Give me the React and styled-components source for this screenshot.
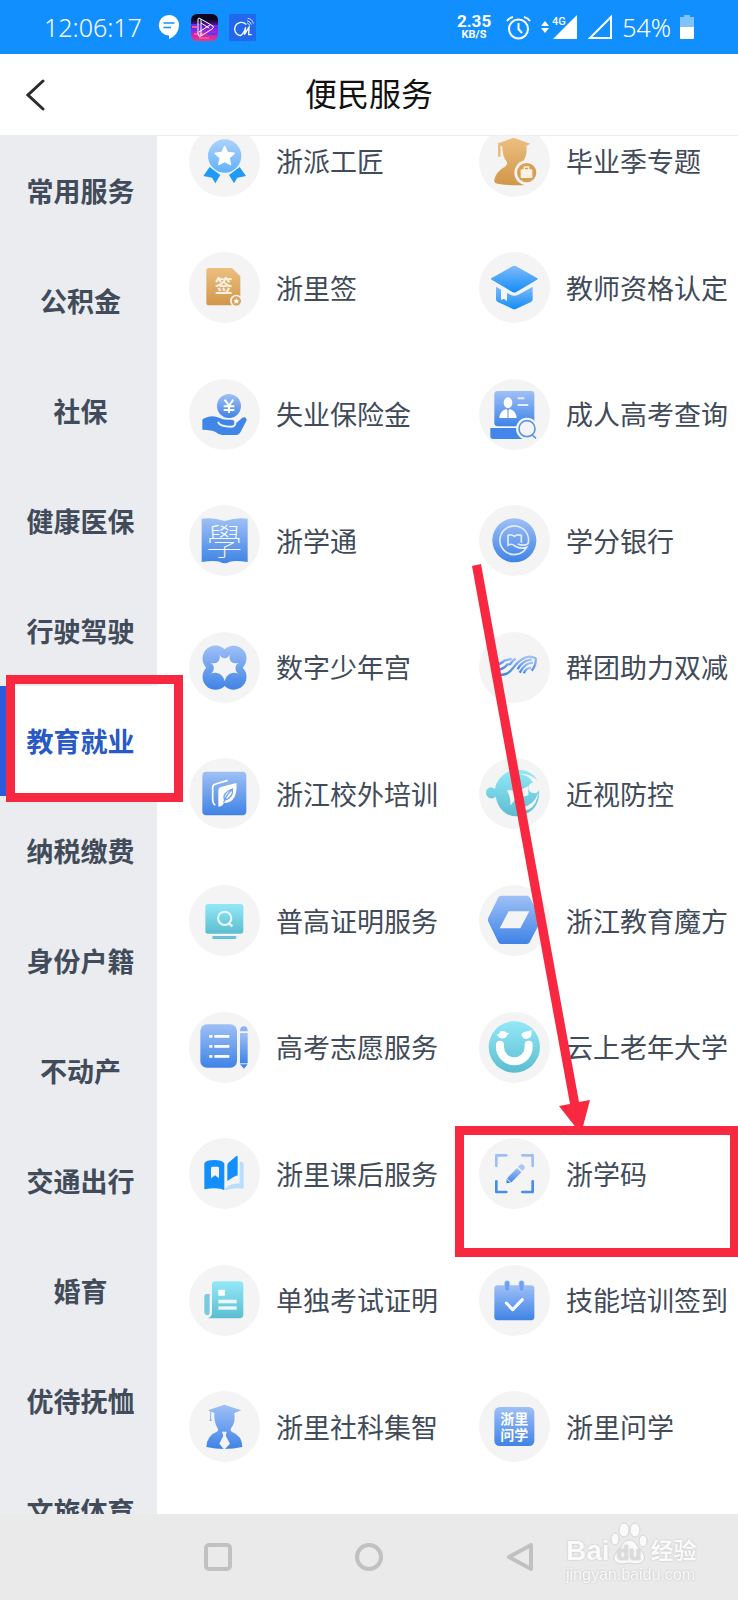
import React from 'react';
import styled, { createGlobalStyle } from 'styled-components';

const GlobalStyle = createGlobalStyle`
  * {
    box-sizing: border-box;
  }
  body {
    margin: 0;
    background: #ffffff;
    font-family: 'Noto Sans CJK SC', sans-serif;
  }
  button {
    border: 0;
    padding: 0;
    background: none;
    font-family: inherit;
    cursor: pointer;
  }
`;

const Screen = styled.div`
  position: relative;
  display: flex;
  flex-direction: column;
  height: 100vh;
  overflow: hidden;
`;

const StatusBar = styled.div`
  display: flex;
  flex-shrink: 0;
  justify-content: space-between;
  align-items: center;
  height: 54px;
  padding: 0 44px;
  background: #128fff;
  color: #ffffff;
`;

const StatusGroup = styled.div`
  display: flex;
  align-items: center;
  gap: ${(props) => props.$gap}px;
`;

const StatusText = styled.span`
  font-family: 'Noto Sans', sans-serif;
  font-size: 25px;
  font-weight: 300;
  line-height: 32px;
`;

const Speed = styled.div`
  display: flex;
  flex-direction: column;
  align-items: center;
  margin-right: 6px;
  font-family: Roboto, sans-serif;
  font-weight: 700;
  font-size: 17px;
  line-height: 15px;
`;

const SpeedUnit = styled.span`
  font-size: 11px;
  line-height: 12px;
`;

const Header = styled.header`
  display: grid;
  grid-template-columns: 72px 1fr 72px;
  flex-shrink: 0;
  align-items: center;
  height: 82px;
  border-bottom: 1px solid #ededee;
`;

const BackButton = styled.button`
  display: flex;
  justify-content: center;
  align-items: center;
  height: 80px;
`;

const Title = styled.h1`
  margin: 0;
  padding-bottom: 5px;
  text-align: center;
  font-size: 32px;
  font-weight: 400;
  line-height: 48px;
  color: #111111;
`;

const Content = styled.main`
  display: flex;
  flex: 1;
  min-height: 0;
  overflow: hidden;
`;

const Sidebar = styled.nav`
  flex: 0 0 157px;
  overflow: hidden;
  background: #ebecf0;
`;

const Category = styled.button`
  display: block;
  width: 100%;
  height: 110px;
  border-left: 6px solid ${(props) => (props.$active ? '#2b5bdb' : 'transparent')};
  padding-right: 2px;
  background: ${(props) => (props.$active ? '#ffffff' : 'transparent')};
  color: ${(props) => (props.$active ? '#2859c5' : '#414b59')};
  font-size: 27px;
  font-weight: 700;
  line-height: 40px;
`;

const Services = styled.section`
  flex: 1;
  min-width: 0;
  overflow: hidden;
`;

// The list is scrolled a little, so its first row is cut by the header
const ServiceGrid = styled.div`
  display: grid;
  grid-template-columns: 1fr 1fr;
  grid-template-rows: repeat(11, 1fr);
  height: 1392px;
  margin-top: -38px;
  padding-right: 1px;
`;

const Service = styled.a`
  display: flex;
  align-items: center;
  gap: 16px;
  padding-left: 32px;
  color: #414b59;
  font-size: 27px;
  font-weight: 400;
  line-height: 40px;
  text-decoration: none;
  white-space: nowrap;
`;

const IconCircle = styled.span`
  display: flex;
  flex: 0 0 71px;
  height: 71px;
  border-radius: 50%;
  background: #f4f4f4;
  overflow: hidden;

  svg {
    width: 100%;
    height: 100%;
  }
`;

const SystemNav = styled.footer`
  display: flex;
  flex-shrink: 0;
  justify-content: center;
  align-items: center;
  gap: 121px;
  height: 86px;
  background: #eaeaea;
`;

const SystemButton = styled.button`
  display: flex;
  width: 30px;
  height: 30px;
`;

const Marker = styled.div`
  position: absolute;
  left: ${(props) => props.$left}px;
  top: ${(props) => props.$top}px;
  width: ${(props) => props.$width}px;
  height: ${(props) => props.$height}px;
  border: 9px solid #f7283f;
  pointer-events: none;
`;

const Arrow = styled.svg`
  position: absolute;
  left: 460px;
  top: 560px;
  pointer-events: none;
`;

const Watermark = styled.div`
  position: absolute;
  right: 38px;
  bottom: 16px;
  width: 134px;
  color: #fafafa;
  text-shadow: 0 0 2px #b8b8b8;
  font-family: 'Liberation Sans', 'Noto Sans CJK SC', sans-serif;
`;

const WatermarkBrand = styled.div`
  display: flex;
  align-items: flex-end;
  height: 44px;
  font-size: 28px;
  font-weight: 700;
  line-height: 30px;
`;

const WatermarkName = styled.span`
  margin-left: 3px;
  font-size: 23px;
`;

const WatermarkUrl = styled.div`
  font-size: 16px;
  line-height: 18px;
`;

const Defs = styled.svg`
  position: absolute;
  width: 0;
  height: 0;
`;

const BG = '#f4f4f4';
const BLUE = 'url(#blue)';
const SKY = 'url(#sky)';
const TEAL = 'url(#teal)';
const GOLD = 'url(#gold)';

const gradients = [
  ['blue', '#9fc0f6', '#3f83e6'],
  ['sky', '#80bbfb', '#138cf7'],
  ['pale', '#add2fd', '#62b1fb'],
  ['teal', '#93e8f7', '#5cbdd0'],
  ['gold', '#ecbf80', '#d1964a'],
];

const icons = {
  medal: (
    <>
      <circle cx="107" cy="90" r="50" fill="url(#pale)" />
      <path
        d="M107 62 L115 80 L135 82 L120 96 L124 115 L107 106 L90 115 L94 96 L79 82 L99 80Z"
        fill="#fff"
        stroke="#fff"
        strokeWidth="5"
        strokeLinejoin="round"
      />
      <path d="M62 123 L94 147 L79 172 L69 155 L43 150Z" fill="#1f9af7" />
      <path d="M152 123 L120 147 L135 172 L145 155 L171 150Z" fill="#1f9af7" />
    </>
  ),
  sign: (
    <>
      <path d="M60 48 H129 L154 73 V152 Q154 160 146 160 H60 Q52 160 52 152 V56 Q52 48 60 48Z" fill={GOLD} />
      <text x="104" y="124" fontSize="54" fontWeight="700" textAnchor="middle" fill="#fbf2e4">签</text>
      <circle cx="142" cy="147" r="19" fill={BG} />
      <circle cx="142" cy="147" r="14" fill="#d9a55f" />
      <path d="M142 139 L145 144 L150 145 L147 149 L148 155 L142 152 L136 155 L137 149 L134 145 L139 144Z" fill={BG} />
    </>
  ),
  coin: (
    <>
      <circle cx="120" cy="81" r="36" fill={BLUE} />
      <path d="M107 62 L120 80 L133 62 M120 80 V102 M104 82 H136 M104 93 H136" fill="none" stroke="#fff" strokeWidth="6" />
      <path
        d="M40 124 Q40 119 46 118 Q70 106 90 116 Q102 124 124 122 Q138 123 142 132 L160 116 Q172 112 173 124 L155 158 Q150 168 138 168 H100 Q88 166 78 158 Q70 153 40 152Z"
        fill="#3f86e8"
      />
      <path d="M88 131 Q94 143 126 143 Q142 142 138 129" fill="none" stroke={BG} strokeWidth="6" strokeLinecap="round" />
    </>
  ),
  graduateBag: (
    <>
      <path
        d="M54 53 L104 35 L154 53 L142 60 Q146 92 130 108 Q126 122 140 132 L150 176 Q100 180 60 174 Q44 172 46 162 Q50 136 78 122 Q86 118 84 108 Q70 92 70 62Z"
        fill={GOLD}
      />
      <path d="M61 56 V92" stroke="#e9b874" strokeWidth="7" />
      <circle cx="143" cy="140" r="37" fill={BG} />
      <circle cx="143" cy="140" r="29" fill="#d9a055" />
      <rect x="125" y="130" width="35" height="26" rx="3" fill="#fbf2e4" />
      <path d="M136 131 V123 H149 V131" fill="none" stroke="#fbf2e4" strokeWidth="4" />
    </>
  ),
  cap: (
    <>
      <path d="M51 104 L94 128 Q106 134 118 128 L161 104 V142 Q161 147 156 150 L112 170 Q106 173 100 170 L56 150 Q51 147 51 142Z" fill={SKY} />
      <path d="M66 106 L84 116 V148 L75 140 L66 144Z" fill={BG} />
      <path d="M38 78 L102 42 Q106 40 110 42 L174 78 Q178 80 174 83 L112 120 Q106 123 100 120 L38 83 Q34 80 38 78Z" fill={SKY} />
    </>
  ),
  examSearch: (
    <>
      <rect x="46" y="36" width="120" height="106" rx="10" fill={BLUE} />
      <path d="M34 147 H152 V180 H42 Q34 180 34 172Z" fill="#4186e8" />
      <ellipse cx="87" cy="71" rx="13" ry="16" fill="#fff" />
      <path d="M61 117 Q62 96 82 90 L87 96 L92 90 Q112 96 113 117Z" fill="#fff" />
      <path d="M87 94 V117" stroke="#7fadf2" strokeWidth="4" />
      <path d="M116 58 H136 M116 78 H148" stroke="#e3edfc" strokeWidth="6" />
      <circle cx="144" cy="149" r="33" fill={BG} />
      <circle cx="144" cy="149" r="24" fill={BG} stroke="#5894ea" strokeWidth="5" />
      <path d="M160 168 L171 178" stroke="#5894ea" strokeWidth="5" />
    </>
  ),
  calligraphy: (
    <>
      <path d="M38 41 Q72 36 107 48 Q142 36 176 41 V171 Q140 165 122 170 Q107 180 92 170 Q74 165 38 171Z" fill={BLUE} />
      <text x="106" y="150" fontSize="108" fontWeight="100" textAnchor="middle" fill="#fff">學</text>
    </>
  ),
  clover: (
    <>
      <path d="M107 52 A38 38 0 1 1 161 107 A38 38 0 1 1 107 162 A38 38 0 1 1 52 107 A38 38 0 1 1 107 52Z" fill={BLUE} />
      <path
        d="M90 64 C96 84 118 84 124 64 C116 84 128 100 150 92 C136 98 136 118 150 126 C128 116 112 128 107 148 C102 128 86 116 64 126 C78 118 78 98 64 92 C86 100 98 84 90 64Z"
        fill={BG}
      />
    </>
  ),
  leafBook: (
    <>
      <rect x="40" y="41" width="132" height="131" rx="12" fill={BLUE} />
      <path d="M77 140 Q71 136 71 124 V88 Q71 80 80 78 L114 68" fill="none" stroke="#fff" strokeWidth="5" strokeLinecap="round" />
      <path d="M88 146 V96 Q88 88 98 86 L142 75 Q146 110 130 126 Q120 136 104 135 Q103 144 88 146Z" fill="#fff" />
      <path d="M104 134 Q112 108 132 92 M107 126 Q98 106 130 93 Q134 118 108 126" fill="none" stroke="#6fa3f0" strokeWidth="4" />
    </>
  ),
  creditBank: (
    <>
      <circle cx="106" cy="106" r="66" fill={BLUE} />
      <path
        d="M148 98 A43 43 0 1 0 143 127 Q126 134 106 122 Q98 114 87 121 V91 Q98 87 106 94 Q114 87 127 91 V113 M148 98 Q150 110 146 117 Q134 124 116 117"
        fill="none"
        stroke="#e1ebfc"
        strokeWidth="5"
      />
    </>
  ),
  waves: (
    <g fill="none" stroke={BLUE} strokeWidth="7">
      <path d="M40 124 C90 140 98 110 116 92 Q146 64 170 79 Q172 98 158 116" />
      <path d="M122 122 Q138 92 162 92" />
      <path d="M134 124 Q142 106 156 108" />
      <path d="M116 112 Q130 84 158 82" />
      <path d="M46 112 Q70 116 84 98 L94 96 Q102 84 110 80" />
      <path d="M48 100 Q66 96 76 86 L98 80" />
    </g>
  ),
  eye: (
    <>
      <path
        d="M24 94 Q34 82 48 92 Q54 60 84 43 Q108 30 140 38 Q164 46 176 68 Q150 44 122 48 Q150 52 162 74 Q148 76 148 90 Q150 104 166 106 Q176 106 180 96 Q184 150 138 169 Q110 182 82 167 Q56 150 50 116 Q34 128 24 114 Q18 104 24 94Z"
        fill={TEAL}
      />
      <path d="M124 150 Q164 144 178 104 Q174 140 150 154 Q136 160 124 150Z" fill={BG} />
      <path d="M84 98 Q98 92 108 104 L148 84 V112 L108 122 Q104 134 94 142 Q96 118 84 98Z" fill={BG} />
    </>
  ),
  monitor: (
    <>
      <rect x="49" y="57" width="114" height="89" rx="8" fill={TEAL} />
      <rect x="70" y="153" width="72" height="9" rx="3" fill="#66c3d5" />
      <circle cx="107" cy="100" r="20" fill="none" stroke="#eafafd" strokeWidth="6" />
      <path d="M119 114 L130 124" stroke="#eafafd" strokeWidth="7" />
    </>
  ),
  listPen: (
    <>
      <rect x="34" y="37" width="110" height="130" rx="20" fill={BLUE} />
      <path d="M61 73 H70 M76 73 H121 M61 103 H70 M76 103 H121 M61 133 H70 M76 133 H121" stroke="#fff" strokeWidth="8" />
      <path d="M153 58 Q153 43 165 43 Q176 43 176 58Z" fill="#8db5f4" />
      <rect x="153" y="63" width="23" height="91" fill={BLUE} />
      <path d="M153 157 H176 L165 170Z" fill="#4186e8" />
    </>
  ),
  openBook: (
    <>
      <path d="M152 72 Q164 70 164 78 V152 Q138 148 112 156 L106 154 Q122 136 152 136Z" fill="#b9defd" />
      <path d="M46 76 Q52 66 76 66 Q98 66 106 76 V156 Q86 146 46 154Z" fill="#128ffc" />
      <path d="M66 90 Q66 86 70 86 H86 Q90 86 90 90 V121 L78 112 L66 121Z" fill={BG} />
      <path d="M115 82 Q115 76 120 73 L142 54 Q146 52 146 58 V112 Q132 116 115 129Z" fill="#128ffc" />
    </>
  ),
  hexagon: (
    <>
      <path d="M66 32 H144 Q149 32 152 37 L184 98 Q187 104 184 110 L152 172 Q149 177 144 177 H66 Q61 177 58 172 L28 110 Q25 104 28 98 L58 37 Q61 32 66 32Z" fill={BLUE} />
      <path d="M89 79 H151 L124 130 H62Z" fill={BG} />
    </>
  ),
  smile: (
    <>
      <circle cx="106" cy="105" r="77" fill={TEAL} />
      <path d="M63 98 V105 A43 43 0 0 0 149 105 V98" fill="none" stroke="#fff" strokeWidth="24" strokeLinecap="round" />
      <path d="M53 66 Q60 70 64 58 Q76 54 84 62 L92 64 L84 70 Q80 82 66 79 Q58 78 53 66Z" fill="#fff" />
      <path d="M127 68 Q134 58 146 58 L158 54 Q160 80 142 81 Q130 80 127 68Z" fill="#fff" />
    </>
  ),
  scanPen: (
    <>
      <g fill="none" strokeWidth="8" strokeLinecap="round" strokeLinejoin="round">
        <path d="M52 84 V52 H82 M130 52 H161 V84" stroke="#9dbff5" />
        <path d="M52 130 V162 H82 M130 162 H161 V130" stroke="#4b8ce9" />
      </g>
      <path d="M83 122 L114 90 L127 103 L96 134 L82 136Z" fill={BLUE} />
      <path d="M117 86 L123 80 Q128 76 134 82 Q140 88 136 93 L130 99Z" fill="#a9c7f7" />
      <path d="M83 121 L97 135" stroke={BG} strokeWidth="3" />
    </>
  ),
  newspaper: (
    <>
      <path d="M78 49 H151 Q163 49 163 61 V148 Q163 160 151 160 H56 Q69 156 69 144 V58 Q69 49 78 49Z" fill={TEAL} />
      <path d="M46 95 Q46 87 54 87 H62 V142 Q62 150 54 151 Q46 149 46 142Z" fill="#76cddd" />
      <rect x="88" y="74" width="20" height="18" rx="2" fill="#fff" />
      <rect x="88" y="104" width="55" height="11" fill="#e8f8fb" />
      <rect x="88" y="124" width="55" height="10" fill="#e8f8fb" />
    </>
  ),
  scholar: (
    <>
      <path
        d="M57 58 L106 41 L157 58 L136 66 Q140 96 126 112 Q122 118 128 122 Q160 134 160 168 Q106 180 52 168 Q54 132 84 122 Q90 118 86 112 Q74 94 76 66Z"
        fill={BLUE}
      />
      <path d="M65 60 V84" stroke="#8bb3f3" strokeWidth="3" />
      <path d="M61 90 L65 80 L69 90Z" fill="#8bb3f3" />
      <path d="M99 122 H113 L110 134 L123 158 L108 174 H104 L91 158 L103 134Z" fill={BG} />
    </>
  ),
  calendar: (
    <>
      <rect x="46" y="61" width="120" height="105" rx="10" fill={BLUE} />
      <rect x="77" y="47" width="15" height="32" rx="7" fill="#6ea2ef" stroke="#a9c7f7" strokeWidth="2" />
      <rect x="120" y="47" width="15" height="32" rx="7" fill="#6ea2ef" stroke="#a9c7f7" strokeWidth="2" />
      <path d="M82 114 L101 134 L130 104" fill="none" stroke="#fff" strokeWidth="9" strokeLinecap="round" strokeLinejoin="round" />
    </>
  ),
  askStudy: (
    <>
      <rect x="46" y="48" width="120" height="117" rx="16" fill={BLUE} />
      <text x="106" y="99" fontSize="42" fontWeight="700" textAnchor="middle" fill="#fff">浙里</text>
      <text x="106" y="147" fontSize="42" fontWeight="700" textAnchor="middle" fill="#fff">问学</text>
    </>
  ),
};

const categories = [
  '常用服务', '公积金', '社保', '健康医保', '行驶驾驶', '教育就业', '纳税缴费',
  '身份户籍', '不动产', '交通出行', '婚育', '优待抚恤', '文旅体育',
];

const services = [
  ['浙派工匠', 'medal'],
  ['毕业季专题', 'graduateBag'],
  ['浙里签', 'sign'],
  ['教师资格认定', 'cap'],
  ['失业保险金', 'coin'],
  ['成人高考查询', 'examSearch'],
  ['浙学通', 'calligraphy'],
  ['学分银行', 'creditBank'],
  ['数字少年宫', 'clover'],
  ['群团助力双减', 'waves'],
  ['浙江校外培训', 'leafBook'],
  ['近视防控', 'eye'],
  ['普高证明服务', 'monitor'],
  ['浙江教育魔方', 'hexagon'],
  ['高考志愿服务', 'listPen'],
  ['云上老年大学', 'smile'],
  ['浙里课后服务', 'openBook'],
  ['浙学码', 'scanPen'],
  ['单独考试证明', 'newspaper'],
  ['技能培训签到', 'calendar'],
  ['浙里社科集智', 'scholar'],
  ['浙里问学', 'askStudy'],
];

const GradientDefs = () => (
  <Defs aria-hidden="true">
    <defs>
      {gradients.map(([id, from, to]) => (
        <linearGradient key={id} id={id} x1="0" y1="0" x2="0" y2="1">
          <stop offset="0" stopColor={from} />
          <stop offset="1" stopColor={to} />
        </linearGradient>
      ))}
      <linearGradient id="neon" x1="0" y1="0" x2="0" y2="1">
        <stop offset="0.2" stopColor="#0b0620" />
        <stop offset="0.55" stopColor="#8a22e8" />
        <stop offset="1" stopColor="#f0357e" />
      </linearGradient>
    </defs>
  </Defs>
);

const ChatIcon = () => (
  <svg width="22" height="26" viewBox="0 0 44 52">
    <path d="M22 2 A20 20 0 0 1 42 23 Q41 42 22 50 V43 A20 20 0 0 1 22 2Z" fill="#fff" />
    <path d="M11 18 H33 M11 27 H26" stroke="#128fff" strokeWidth="3" />
  </svg>
);

const PlayerIcon = () => (
  <svg width="27" height="27" viewBox="0 0 27 27">
    <rect width="27" height="27" rx="6" fill="url(#neon)" />
    <path d="M0 11 H9 M17 12 H27 M2 16 H11 M17 20 H26" stroke="#5b35f5" strokeWidth="2" />
    <path d="M3 20 H12 M8 24 H18 M1 13 H6" stroke="#ff4f9a" strokeWidth="2" />
    <path d="M8 4 L22 12 Q23 14 21 15 L10 22 Q7 23 7 20 V6 Q7 4 8 4 M10 5 V22 M8 18 L19 11 M10 9 L18 14" fill="none" stroke="#fff" />
  </svg>
);

const MusicIcon = () => (
  <svg width="27" height="27" viewBox="0 0 81 81">
    <rect width="81" height="81" rx="3" fill="#2268ee" />
    <path d="M52 32 A20 20 0 1 0 34 65 Q44 60 50 40 L46 62 L60 40 L59 62 L68 62" fill="none" stroke="#fff" strokeWidth="4" />
    <path d="M54 27 Q60 28 61 34 M54 20 Q65 22 67 32 M56 13 Q70 14 73 29" fill="none" stroke="#cfe0ff" strokeWidth="3" />
  </svg>
);

const AlarmIcon = () => (
  <svg width="25" height="25" viewBox="0 0 50 50" fill="none" stroke="#fff" strokeWidth="4">
    <circle cx="25" cy="28" r="19" />
    <path d="M25 16 V28 L32 36 M2 12 Q6 6 14 4 M48 12 Q44 6 36 4" />
  </svg>
);

const SignalIcon = () => (
  <svg width="38" height="26" viewBox="0 0 38 26" fill="#fff">
    <path d="M1 12 L5 7 L9 12Z M1 14 L5 19 L9 14Z" />
    <path d="M37 1 V25 H13Z" />
    <text x="12" y="11" fontSize="11" fontWeight="500" fontFamily="Roboto, sans-serif">4G</text>
  </svg>
);

const EmptySignalIcon = () => (
  <svg width="26" height="26" viewBox="0 0 26 26">
    <path d="M24 3 V24 H3Z" fill="none" stroke="#fff" strokeWidth="2" />
  </svg>
);

const BatteryIcon = () => (
  <svg width="14" height="24" viewBox="0 0 14 24">
    <path d="M4 0 H10 V2 H14 V12 H0 V2 H4Z" fill="#7fc2ff" />
    <path d="M0 12 H14 V23 Q14 24 13 24 H1 Q0 24 0 23Z" fill="#fff" />
  </svg>
);

const Paw = () => (
  <svg width="38" height="44" viewBox="0 0 38 44" fill="#fafafa" stroke="#d4d4d4">
    <ellipse cx="5" cy="17" rx="4" ry="6" />
    <ellipse cx="14" cy="8" rx="5" ry="7" />
    <ellipse cx="25" cy="8" rx="5" ry="7" />
    <ellipse cx="33" cy="19" rx="4" ry="6" />
    <path d="M19 18 Q25 18 28 25 Q36 32 34 38 Q31 44 19 41 Q7 44 4 38 Q3 32 11 25 Q14 18 19 18Z" />
    <text x="19" y="38" fontSize="20" fontWeight="700" textAnchor="middle" fill="#dcdcdc" stroke="none">du</text>
  </svg>
);

const ServiceItem = ({ name, icon }) => (
  <Service href="#">
    <IconCircle>
      <svg viewBox="0 0 213 213" aria-hidden="true">{icons[icon]}</svg>
    </IconCircle>
    {name}
  </Service>
);

const App = () => (
  <Screen>
    <GlobalStyle />
    <GradientDefs />
    <StatusBar>
      <StatusGroup $gap={16}>
        <StatusText>12:06:17</StatusText>
        <StatusGroup $gap={11}>
          <ChatIcon />
          <PlayerIcon />
          <MusicIcon />
        </StatusGroup>
      </StatusGroup>
      <StatusGroup $gap={9}>
        <Speed>
          2.35
          <SpeedUnit>KB/S</SpeedUnit>
        </Speed>
        <AlarmIcon />
        <SignalIcon />
        <EmptySignalIcon />
        <StatusText>54%</StatusText>
        <BatteryIcon />
      </StatusGroup>
    </StatusBar>
    <Header>
      <BackButton aria-label="返回">
        <svg width="20" height="32" viewBox="0 0 20 32" fill="none" stroke="#2b2c30" strokeWidth="3" strokeLinecap="round">
          <path d="M17 2 L2 16 L17 30" />
        </svg>
      </BackButton>
      <Title>便民服务</Title>
    </Header>
    <Content>
      <Sidebar>
        {categories.map((name) => (
          <Category key={name} $active={name === '教育就业'}>{name}</Category>
        ))}
      </Sidebar>
      <Services>
        <ServiceGrid>
          {services.map(([name, icon]) => (
            <ServiceItem key={name} name={name} icon={icon} />
          ))}
        </ServiceGrid>
      </Services>
    </Content>
    <SystemNav>
      <SystemButton aria-label="最近任务">
        <svg width="30" height="30" viewBox="0 0 30 30" fill="none" stroke="#c1c1c1" strokeWidth="4">
          <rect x="3" y="3" width="24" height="24" rx="3" />
        </svg>
      </SystemButton>
      <SystemButton aria-label="主屏幕">
        <svg width="30" height="30" viewBox="0 0 30 30" fill="none" stroke="#c1c1c1" strokeWidth="4">
          <circle cx="15" cy="15" r="12" />
        </svg>
      </SystemButton>
      <SystemButton aria-label="后退">
        <svg width="30" height="30" viewBox="0 0 30 30" fill="none" stroke="#c1c1c1" strokeWidth="4" strokeLinejoin="round">
          <path d="M26 3 V27 L4 15Z" />
        </svg>
      </SystemButton>
    </SystemNav>
    <Marker $left={6} $top={675} $width={177} $height={127} />
    <Marker $left={455} $top={1126} $width={284} $height={131} />
    <Arrow width="140" height="580" viewBox="460 560 140 580" fill="#f7283f">
      <path d="M472 566 L481 564 L579 1102 L590 1100 L581 1134 L559 1106 L570 1104Z" />
    </Arrow>
    <Watermark>
      <WatermarkBrand>
        Bai
        <Paw />
        <WatermarkName>经验</WatermarkName>
      </WatermarkBrand>
      <WatermarkUrl>jingyan.baidu.com</WatermarkUrl>
    </Watermark>
  </Screen>
);

export default App;
